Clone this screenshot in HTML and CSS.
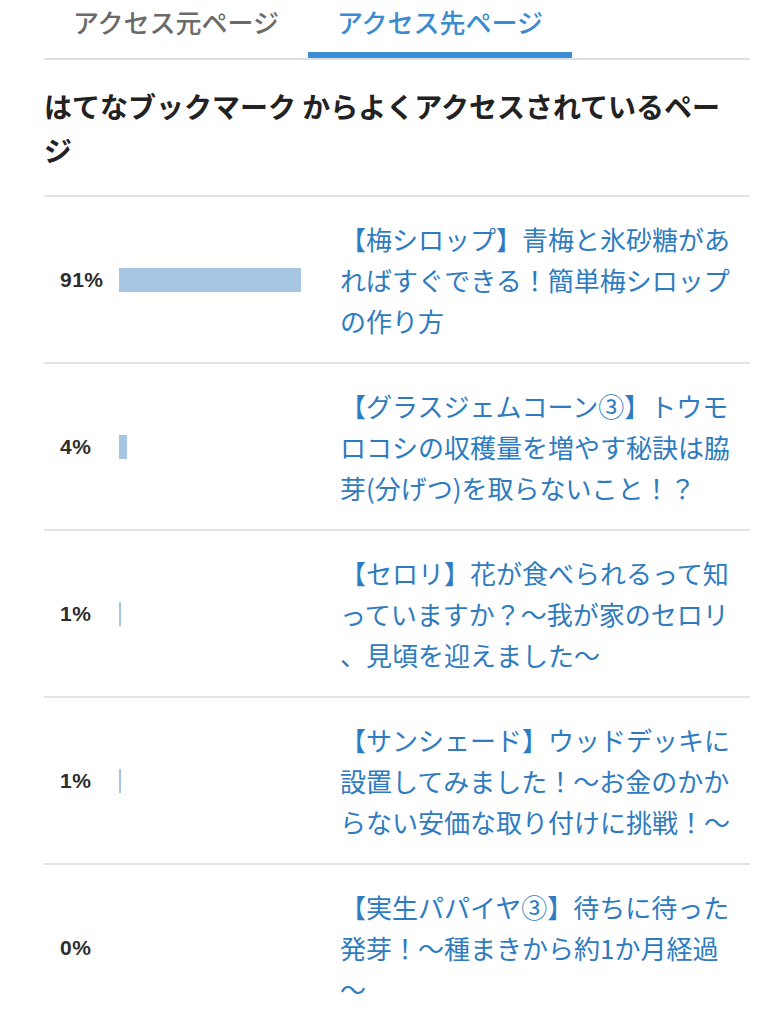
FILE: index.html
```html
<!DOCTYPE html>
<html lang="ja">
<head>
<meta charset="utf-8">
<title>アクセス先ページ</title>
<link rel="stylesheet" href="styles.css">
</head>
<body>
<div class="page">
  <nav class="tabs">
    <div class="tab">アクセス元ページ</div>
    <div class="tab active">アクセス先ページ</div>
  </nav>
  <h2 class="heading">はてなブックマーク からよくアクセスされているページ</h2>
  <ul class="list">
    <li class="row">
      <span class="pct">91%</span>
      <div class="track"><div class="bar" style="width:91%"></div></div>
      <a class="title">【梅シロップ】青梅と氷砂糖があればすぐできる！簡単梅シロップの作り方</a>
    </li>
    <li class="row">
      <span class="pct">4%</span>
      <div class="track"><div class="bar" style="width:4%"></div></div>
      <a class="title">【グラスジェムコーン③】トウモロコシの収穫量を増やす秘訣は脇芽(分げつ)を取らないこと！？</a>
    </li>
    <li class="row">
      <span class="pct">1%</span>
      <div class="track"><div class="bar" style="width:1%"></div></div>
      <a class="title">【セロリ】花が食べられるって知っていますか？〜我が家のセロリ、見頃を迎えました〜</a>
    </li>
    <li class="row">
      <span class="pct">1%</span>
      <div class="track"><div class="bar" style="width:1%"></div></div>
      <a class="title">【サンシェード】ウッドデッキに設置してみました！〜お金のかからない安価な取り付けに挑戦！〜</a>
    </li>
    <li class="row">
      <span class="pct">0%</span>
      <div class="track"><div class="bar" style="width:0%"></div></div>
      <a class="title">【実生パパイヤ③】待ちに待った発芽！〜種まきから約1か月経過〜</a>
    </li>
  </ul>
</div>
</body>
</html>
```

FILE: styles.css
```css
html, body {
  margin: 0;
  padding: 0;
  background: #ffffff;
}

body {
  font-family: "Noto Sans CJK JP", "Noto Sans", sans-serif;
}

.page {
  margin: 0 30px 0 44px;
}

.tabs {
  display: flex;
  border-bottom: 2px solid #dde0e4;
}

.tab {
  width: 264px;
  text-align: center;
  font-size: 26px;
  font-weight: 500;
  line-height: 44px;
  padding-bottom: 8px;
  border-bottom: 6px solid transparent;
  color: #6a6a6a;
}

.tab.active {
  color: #3a8ccf;
  border-bottom-color: #3b8fd5;
}

.heading {
  margin: 0;
  padding: 24px 6px 23px 0;
  font-size: 28px;
  line-height: 44px;
  font-weight: 700;
  color: #222222;
  border-bottom: 2px solid #e2e4e7;
}

.list {
  list-style: none;
  margin: 0;
  padding: 0;
}

.row {
  display: grid;
  grid-template-columns: 59px 221px 400px;
  align-items: center;
  padding: 21px 0 21px 16px;
  border-bottom: 2px solid #e2e4e7;
}

.row:last-child {
  border-bottom: none;
}

.pct {
  font-family: "Liberation Sans", Arial, sans-serif;
  font-weight: 700;
  font-size: 21px;
  color: #2e2e2e;
  letter-spacing: 0.5px;
}

.track {
  width: 200px;
  height: 24px;
}

.bar {
  height: 100%;
  background: #a6c4e4;
}

.title {
  font-size: 26px;
  line-height: 41px;
  color: #2e7bbf;
  line-break: anywhere;
  text-decoration: none;
}
```
